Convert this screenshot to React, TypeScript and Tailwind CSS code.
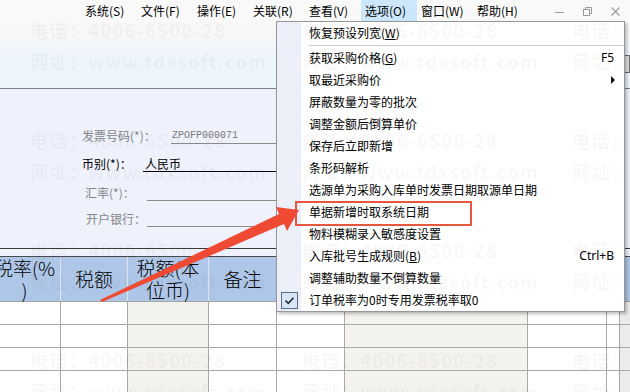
import React from "react";

type MenuItem = {
  label: string;
  accessKey?: string;
  shortcut?: string;
  submenu?: boolean;
  checked?: boolean;
};

const menuBarItems = ["系统(S)", "文件(F)", "操作(E)", "关联(R)", "查看(V)", "选项(O)", "窗口(W)", "帮助(H)"];

const optionItems: MenuItem[] = [
  { label: "获取采购价格", accessKey: "G", shortcut: "F5" },
  { label: "取最近采购价", submenu: true },
  { label: "屏蔽数量为零的批次" },
  { label: "调整金额后倒算单价" },
  { label: "保存后立即新增" },
  { label: "条形码解析" },
  { label: "选源单为采购入库单时发票日期取源单日期" },
  { label: "单据新增时取系统日期" },
  { label: "物料模糊录入敏感度设置" },
  { label: "入库批号生成规则", accessKey: "B", shortcut: "Ctrl+B" },
  { label: "调整辅助数量不倒算数量" },
  { label: "订单税率为0时专用发票税率取0", checked: true },
];

// table columns, left one is cut by the window edge
const columns = [
  { w: "w-[72px]", title: ["税率(%", ")"], tint: false },
  { w: "w-[67px]", title: ["税额"], tint: false },
  { w: "w-[81px]", title: ["税额(本", "位币)"], tint: true },
  { w: "w-[68px]", title: ["备注"], tint: false },
  { w: "w-[68px]", title: [], tint: false },
  { w: "w-[183px]", title: [], tint: true },
  { w: "w-[79px]", title: [], tint: false },
  { w: "w-[13px]", title: [], tint: false },
];

const watermarkCols = [30, 302, 572];
const watermarkRows = [19, 129, 239, 349];

function MenuBar() {
  return (
    <div className="flex h-[22px] items-center bg-[#f9f9f9] text-[12px] text-black">
      <div className="ml-[81px] flex h-full">
        {menuBarItems.map((item) => (
          <div
            key={item}
            className={`flex h-full w-[56px] items-center pl-[4px] ${item === "选项(O)" ? "bg-[#cce6fb]" : ""}`}
          >
            {item}
          </div>
        ))}
      </div>
      <div className="ml-auto flex items-center gap-[19px] pr-[10px]">
        <svg width="9" height="9" viewBox="0 0 9 9">
          <path d="M0 5.5h9" stroke="#9b9b9b" strokeWidth="1" />
        </svg>
        <svg width="9" height="9" viewBox="0 0 9 9" fill="none" stroke="#9b9b9b" strokeWidth="1">
          <rect x="0.5" y="2.5" width="6" height="6" />
          <path d="M2.5 2.5V0.5h6v6h-2" />
        </svg>
        <svg width="9" height="9" viewBox="0 0 9 9" fill="none" stroke="#9b9b9b" strokeWidth="1.1">
          <path d="M0.5 0.5l8 8M8.5 0.5l-8 8" />
        </svg>
      </div>
    </div>
  );
}

function Toolbar() {
  return (
    <div className="flex h-[66px] justify-end bg-linear-to-b from-[#f7f7f7] from-20% to-[#edf5fd] to-55%">
      <div className="mt-[33px] h-[18px] w-[30px] border border-[#6e6e6e] bg-[#dedede]" />
    </div>
  );
}

function FormArea() {
  return (
    <div className="bg-[#eff1fd]">
      <div className="flex h-[160px] flex-col border-b border-[#3a3a3a] pt-[31px] text-[12px] leading-[14px]">
        <div className="flex h-[24px] items-end">
          <span className="w-[171px] pb-[1px] pl-[82px] text-[#858585]">发票号码(*)：</span>
          <div className="w-[130px] border-b border-[#8c8c8c] pl-[1px] font-['Liberation_Mono',monospace] text-[10px] text-[#7a7a7a]">
            ZPOFP000071
          </div>
        </div>
        <div className="mt-[4px] flex h-[24px] items-end">
          <span className="w-[143px] pb-[1px] pl-[82px] text-black">币别(*)：</span>
          <div className="w-[160px] border-b border-black pl-[2px] text-black">人民币</div>
        </div>
        <div className="mt-[5px] flex h-[24px] items-end">
          <span className="w-[147px] pb-[1px] pl-[85px] text-[#858585]">汇率(*)：</span>
          <div className="h-[14px] w-[160px] border-b border-[#8c8c8c]" />
        </div>
        <div className="mt-[2px] flex h-[24px] items-end">
          <span className="w-[147px] pb-[1px] pl-[86px] text-[#858585]">开户银行：</span>
          <div className="h-[14px] w-[160px] border-b border-[#8c8c8c]" />
        </div>
      </div>
      <div className="h-[7px]" />
    </div>
  );
}

function Table() {
  return (
    <div className="-ml-[11px]">
      <div className="flex h-[46px] border-y border-t-[#4a4a4a] border-b-[#a3a3a3] bg-[#aec6e7] text-[19px] leading-[22px] font-light text-black">
        {columns.map((col, i) => (
          <div
            key={i}
            className={`${col.w} flex shrink-0 flex-col items-center justify-center border-r border-[#dde4ee] text-center`}
          >
            {col.title.map((line) => (
              <span key={line}>{line}</span>
            ))}
          </div>
        ))}
        <div className="flex-1" />
      </div>
      {[0, 1, 2, 3].map((r) => (
        <div key={r} className="flex h-[23px] border-b border-[#a8a8a8]">
          {columns.map((col, i) => (
            <div
              key={i}
              className={`${col.w} shrink-0 border-r border-[#a8a8a8] ${col.tint ? "bg-[#f4f2ed]" : "bg-white"}`}
            />
          ))}
          <div className="flex-1 bg-[#ebebeb]" />
        </div>
      ))}
    </div>
  );
}

function Label({ item }: { item: MenuItem }) {
  return (
    <span className="flex-1 whitespace-nowrap">
      {item.label}
      {item.accessKey && (
        <>
          (<span className="underline">{item.accessKey}</span>)
        </>
      )}
    </span>
  );
}

function MenuRow({ item }: { item: MenuItem }) {
  return (
    <div className="flex h-[22px]">
      <div className="flex w-[24px] shrink-0 items-center justify-center bg-[#eceff8]">
        {item.checked && (
          <div className="flex h-[17px] w-[17px] items-center justify-center border border-[#5c6c85] bg-[#d6e6f7]">
            <svg width="11" height="9" viewBox="0 0 11 9" fill="none">
              <path d="M1.5 4.5l2.8 2.8L9.5 1.8" stroke="#1f2b3b" strokeWidth="1.6" />
            </svg>
          </div>
        )}
      </div>
      <div className="flex flex-1 items-center pr-[10px] pl-[8px]">
        <Label item={item} />
        {item.shortcut && <span className="font-['Noto_Sans',sans-serif]">{item.shortcut}</span>}
        {item.submenu && (
          <svg width="4" height="8" viewBox="0 0 4 8" className="mr-[-1px]">
            <path d="M0 0l4 4-4 4z" fill="#111" />
          </svg>
        )}
      </div>
    </div>
  );
}

function OptionsMenu() {
  return (
    <div className="absolute top-[21px] left-[276px] w-[349px] border border-[#979797] bg-white text-[12px] text-black shadow-[2px_2px_3px_rgba(0,0,0,0.25)]">
      <MenuRow item={{ label: "恢复预设列宽", accessKey: "W" }} />
      <div className="flex h-[3px]">
        <div className="w-[24px] bg-[#eceff8]" />
        <div className="mt-[1px] ml-[8px] flex-1 border-t border-[#c9c9c9]" />
      </div>
      {optionItems.map((item) => (
        <MenuRow key={item.label} item={item} />
      ))}
    </div>
  );
}

function Watermark() {
  return (
    <div className="pointer-events-none absolute inset-0 text-[18px] leading-[22px] font-semibold tracking-[1.5px] text-black/[0.04]">
      {watermarkRows.map((top) =>
        watermarkCols.map((left) => (
          <div key={`${top}-${left}`} className="absolute whitespace-nowrap" style={{ top, left }}>
            <div>电话：4006-6500-28</div>
            <div className="mt-[9px]">网址：www.tdxsoft.com</div>
          </div>
        ))
      )}
    </div>
  );
}

function Callout() {
  return (
    <>
      <div className="absolute top-[201px] left-[295px] h-[25px] w-[177px] border-2 border-[#e5573f]" />
      <svg className="pointer-events-none absolute inset-0" width="630" height="392" viewBox="0 0 630 392">
        <polygon
          points="100,300 279,214 276,207 299,210 287,231 284,224 102,302"
          fill="#ef4a33"
        />
      </svg>
    </>
  );
}

export default function App() {
  return (
    <div className="relative h-[392px] w-[630px] overflow-hidden bg-white font-['Noto_Sans_CJK_SC',sans-serif]">
      <MenuBar />
      <Toolbar />
      <div className="h-px bg-[#7d808b]" />
      <FormArea />
      <Table />
      <OptionsMenu />
      <Watermark />
      <Callout />
    </div>
  );
}
